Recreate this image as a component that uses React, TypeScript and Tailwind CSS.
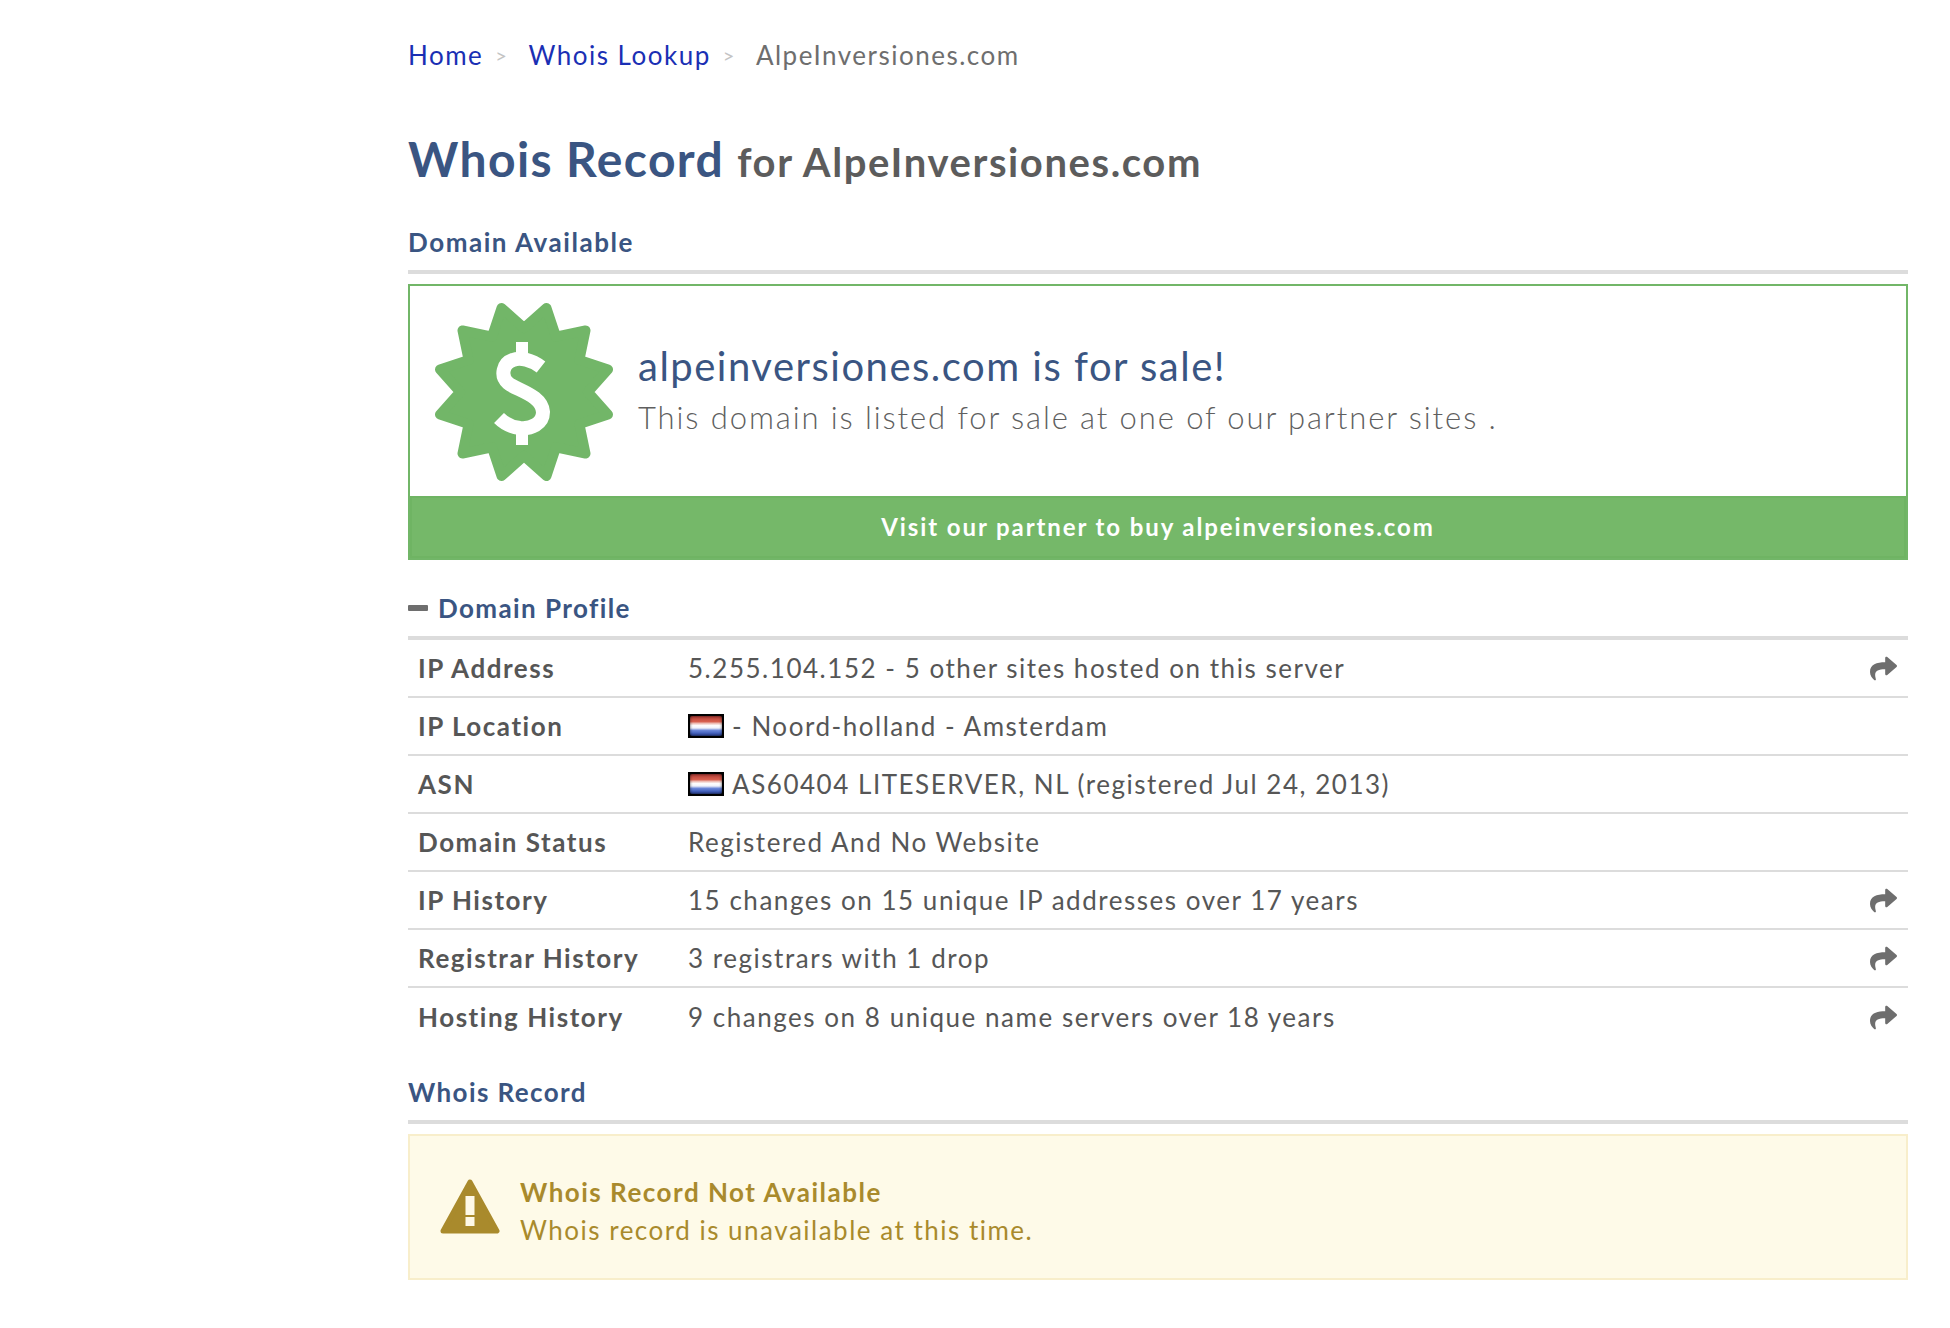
import React from "react";
import { FaShare } from "react-icons/fa";

function Flag() {
  return (
    <span className="inline-block w-[36px] h-[24px] bg-black p-[2px] shrink-0">
      <span className="block w-full h-full rounded-[2px] shadow-[inset_0_0_3px_rgba(0,0,0,0.7)] bg-[linear-gradient(180deg,#b03a34_0%,#d8604f_28%,#f0c4bc_38%,#ffffff_48%,#f0f2fa_60%,#6a86d8_72%,#3f5cb8_88%,#2c4290_100%)]" />
    </span>
  );
}

function Badge() {
  const pts: string[] = [];
  for (let i = 0; i < 24; i++) {
    const r = i % 2 === 0 ? 64 : 87;
    const a = (i * 15 * Math.PI) / 180;
    pts.push(`${(Math.sin(a) * r).toFixed(1)},${(-Math.cos(a) * r).toFixed(1)}`);
  }
  return (
    <svg viewBox="-100 -100 200 200" className="w-[200px] h-[200px] shrink-0 mt-[2px]">
      <polygon points={pts.join(" ")} fill="#72b668" stroke="#72b668" strokeWidth="10" strokeLinejoin="round" />
      <g transform="translate(-2 1)">
        <path d="M19 -26 C10 -33 -2 -36 -9 -33 C-19 -30 -22 -17 -14 -10 C-6 -3 20 2 21 19 C21 31 9 36 -2 35 C-10 34 -18 30 -23 25" fill="none" stroke="#fff" strokeWidth="14" />
        <rect x="-6" y="-51" width="12" height="20" fill="#fff" />
        <rect x="-6" y="32" width="12" height="20" fill="#fff" />
      </g>
    </svg>
  );
}

function Warn() {
  return (
    <svg viewBox="0 0 60 56" className="w-[60px] h-[56px] shrink-0">
      <path d="M30 3 L57 52 L3 52 Z" fill="#a98a2c" stroke="#a98a2c" strokeWidth="5" strokeLinejoin="round" />
      <rect x="25.500" y="17" width="9" height="19" fill="#fef9e7" />
      <rect x="25.500" y="38" width="9" height="9" fill="#fef9e7" />
    </svg>
  );
}

const rows: { label: string; value: React.ReactNode; arrow?: boolean; last?: boolean }[] = [
  { label: "IP Address", value: "5.255.104.152 - 5 other sites hosted on this server", arrow: true },
  { label: "IP Location", value: <span className="flex items-center gap-[8px]"><Flag /><span>- Noord-holland - Amsterdam</span></span> },
  { label: "ASN", value: <span className="flex items-center gap-[8px]"><Flag /><span>AS60404 LITESERVER, NL (registered Jul 24, 2013)</span></span> },
  { label: "Domain Status", value: "Registered And No Website" },
  { label: "IP History", value: "15 changes on 15 unique IP addresses over 17 years", arrow: true },
  { label: "Registrar History", value: "3 registrars with 1 drop", arrow: true },
  { label: "Hosting History", value: "9 changes on 8 unique name servers over 18 years", arrow: true, last: true },
];

export default function App() {
  return (
    <div className="bg-white h-[1328px] font-['Lato',sans-serif] overflow-hidden">
      <div className="ml-[408px] w-[1500px]">
        <div className="pt-[38px] h-[95px] flex items-start text-[26px] leading-[34px] tracking-[1.500px]">
          <a className="text-[#1a2fb4]">Home</a>
          <span className="text-[#c4c4c4] text-[20px] ml-[12px] mr-[20px]">&gt;</span>
          <a className="text-[#1a2fb4]">Whois Lookup</a>
          <span className="text-[#c4c4c4] text-[20px] ml-[12px] mr-[20px]">&gt;</span>
          <span className="text-[#6e6e6e]">AlpeInversiones.com</span>
        </div>
        <h1 className="mt-[32px] h-[64px] leading-[64px] font-bold text-[#3a5582] text-[48px] tracking-[1.400px] whitespace-nowrap">
          Whois Record <span className="text-[#5c5c5c] text-[40px] tracking-[1.600px]">for AlpeInversiones.com</span>
        </h1>
        <div className="mt-[33px] h-[36px] leading-[36px] font-bold text-[#3a5582] text-[26px] tracking-[1.550px]">Domain Available</div>
        <div className="mt-[10px] h-[4px] bg-[#dcdcdc]" />
        <div className="mt-[10px] border-2 border-[#72b668]">
          <div className="h-[210px] flex items-center pl-[14px]">
            <Badge />
            <div className="ml-[14px] -mt-[4px]">
              <div className="text-[#3a5582] text-[40px] leading-[52px] tracking-[1.500px]">alpeinversiones.com is for sale!</div>
              <div className="text-[#5f5f5f] text-[31px] leading-[42px] mt-[4px] font-light tracking-[1.900px]">This domain is listed for sale at one of our partner sites .</div>
            </div>
          </div>
          <div className="h-[62px] bg-[#75b869] border-2 border-[#6fb463] flex items-center justify-center text-white font-bold text-[24px] tracking-[1.900px]">Visit our partner to buy alpeinversiones.com</div>
        </div>
        <div className="mt-[27px] h-[42px] flex items-center gap-[10px]">
          <span className="w-[20px] h-[6px] bg-[#6e6e6e] rounded-[1px]" />
          <span className="font-bold text-[#3a5582] text-[26px] tracking-[1.400px]">Domain Profile</span>
        </div>
        <div className="mt-[7px] h-[4px] bg-[#dcdcdc]" />
        {rows.map((r) => (
          <div key={r.label} className={`h-[58px] flex items-center text-[#565656] text-[26px] tracking-[1.530px] ${r.last ? "" : "border-b-2 border-[#dcdcdc]"}`}>
            <div className="w-[280px] pl-[10px] font-bold shrink-0">{r.label}</div>
            <div className="flex-1">{r.value}</div>
            {r.arrow && <FaShare className="w-[27px] h-[27px] text-[#6e6e6e] mr-[11px]" />}
          </div>
        ))}
        <div className="mt-[28px] h-[36px] leading-[36px] font-bold text-[#3a5582] text-[26px] tracking-[1.400px]">Whois Record</div>
        <div className="mt-[10px] h-[4px] bg-[#dcdcdc]" />
        <div className="mt-[10px] h-[146px] bg-[#fefae8] border-2 border-[#f8eecb] flex items-center pl-[30px]">
          <Warn />
          <div className="ml-[20px] mt-[8px] text-[#a98a2c] text-[26px] leading-[38px] tracking-[1.500px]">
            <div className="font-bold">Whois Record Not Available</div>
            <div>Whois record is unavailable at this time.</div>
          </div>
        </div>
      </div>
    </div>
  );
}
